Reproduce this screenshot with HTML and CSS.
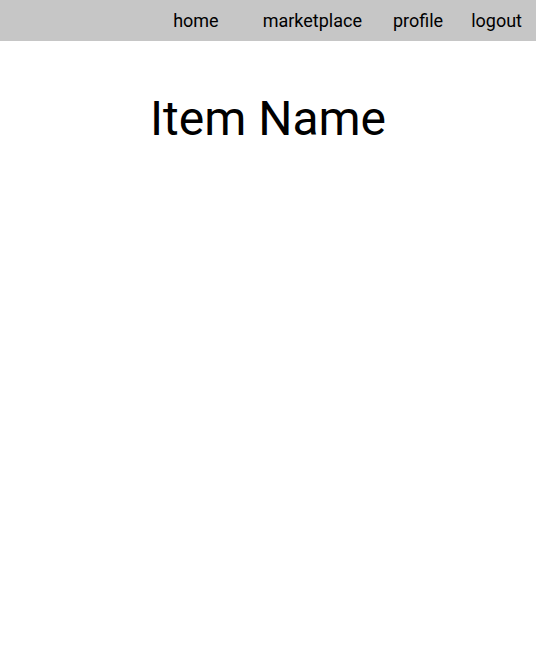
FILE: index.html
```html
<!DOCTYPE html>
<html>
<head>
<meta charset="utf-8">
<link rel="stylesheet" href="styles.css">
</head>
<body>
<nav class="nav">
  <a class="nav-link nav-home" href="#">home</a>
  <a class="nav-link nav-market" href="#">marketplace</a>
  <a class="nav-link nav-profile" href="#">profile</a>
  <a class="nav-link nav-logout" href="#">logout</a>
</nav>
<main class="content">
  <h1 class="title">Item Name</h1>
</main>
</body>
</html>
```
FILE: styles.css
```css
html, body {
  margin: 0;
  padding: 0;
  background: #ffffff;
  font-family: Roboto, "Noto Sans", sans-serif;
  color: #000;
}
.nav {
  height: 41px;
  background: #c6c6c6;
  display: flex;
  justify-content: flex-end;
  align-items: center;
  padding-right: 14px;
}
.nav-link {
  font-size: 18px;
  color: #000;
  text-decoration: none;
}
.nav-market { margin-left: 44px; }
.nav-profile { margin-left: 31px; }
.nav-logout { margin-left: 28px; }
.content {
  display: flex;
  justify-content: center;
}
.title {
  margin: 49px 0 0;
  font-size: 48px;
  font-weight: 400;
}
```
